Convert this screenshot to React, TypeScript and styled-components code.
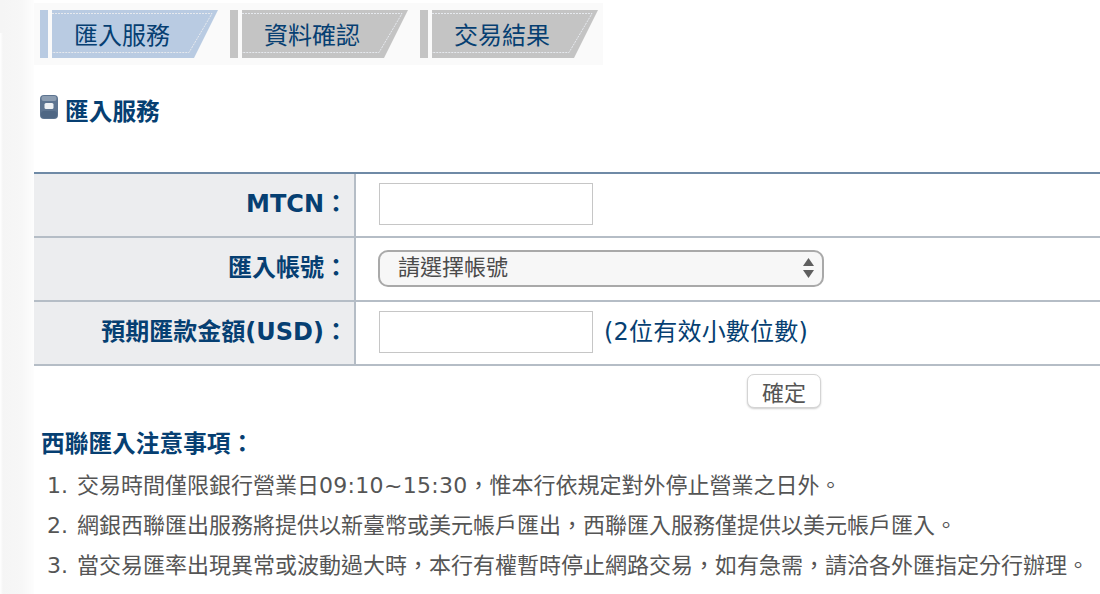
import styled, { createGlobalStyle } from 'styled-components';

const NAVY = '#063f72';
const FONT = `"DejaVu Sans", "Noto Sans CJK TC", sans-serif`;
const COLON = '\uFF1A';
const COMMA = '\uFF0C';

const steps = ['匯入服務', '資料確認', '交易結果'];

function App() {
  return (
    <Page>
      <GlobalStyle />
      <Sidebar />
      <Main>
        <StepBand>
          {steps.map((step, index) => (
            <Step key={step}>
              <StepBar $active={index === 0} />
              <StepLabel $active={index === 0}>
                <StepEdge viewBox="0 0 166 48">
                  <polyline points="0,3.5 160,3.5 137,42.5 0,42.5" />
                </StepEdge>
                <StepText>{step}</StepText>
              </StepLabel>
            </Step>
          ))}
        </StepBand>

        <Heading>
          <HeadingIcon viewBox="0 0 18 24">
            <rect x="0" y="0" width="18" height="24" rx="4" fill="#5d7490" />
            <rect x="1.5" y="1" width="15" height="5" rx="2" fill="#8c9db1" />
            <rect x="4.5" y="8" width="9" height="6" rx="1.5" fill="#eef1f4" />
            <rect x="1" y="16" width="16" height="7" rx="3" fill="#4f6784" />
          </HeadingIcon>
          匯入服務
        </Heading>

        <FormTable>
          <Row>
            <LabelCell>MTCN{COLON}</LabelCell>
            <ValueCell>
              <TextInput type="text" />
            </ValueCell>
          </Row>
          <Row>
            <LabelCell>匯入帳號{COLON}</LabelCell>
            <ValueCell>
              <SelectBox>
                <span>請選擇帳號</span>
                <SelectArrows viewBox="0 0 11 20">
                  <path d="M5.5 0 L11 8 L0 8 Z" fill="#5f5f5f" />
                  <path d="M5.5 20 L11 12 L0 12 Z" fill="#5f5f5f" />
                </SelectArrows>
              </SelectBox>
            </ValueCell>
          </Row>
          <Row>
            <LabelCell>預期匯款金額(USD){COLON}</LabelCell>
            <ValueCell>
              <TextInput type="text" />
              <Hint>(2位有效小數位數)</Hint>
            </ValueCell>
          </Row>
        </FormTable>

        <Actions>
          <ConfirmButton type="button">確定</ConfirmButton>
        </Actions>

        <NotesTitle>西聯匯入注意事項{COLON}</NotesTitle>
        <NotesList>
          <li>
            交易時間僅限銀行營業日<TimeRange>09:10~15:30</TimeRange>
            {COMMA}惟本行依規定對外停止營業之日外。
          </li>
          <li>網銀西聯匯出服務將提供以新臺幣或美元帳戶匯出{COMMA}西聯匯入服務僅提供以美元帳戶匯入。</li>
          <li>
            當交易匯率出現異常或波動過大時{COMMA}本行有權暫時停止網路交易{COMMA}如有急需{COMMA}
            請洽各外匯指定分行辦理。
          </li>
        </NotesList>
      </Main>
    </Page>
  );
}

export default App;

const GlobalStyle = createGlobalStyle`
  html, body {
    margin: 0;
    padding: 0;
    background: #fff;
  }
`;

const Page = styled.div`
  width: 1100px;
  height: 594px;
  overflow: hidden;
  display: flex;
  font-family: ${FONT};
`;

const Sidebar = styled.div`
  width: 34px;
  flex-shrink: 0;
  background:
    linear-gradient(#f5f5f5, #f5f5f5) 0 0 / 3px 33px no-repeat,
    linear-gradient(to right, #fff 0, #f5f5f5 3px, #f7f7f7 22px, #fdfdfd 34px);
`;

const Main = styled.div`
  flex: 1;
  min-width: 0;
`;

const StepBand = styled.div`
  width: 569px;
  height: 62px;
  margin-top: 3px;
  padding: 7px 0 0 6px;
  box-sizing: border-box;
  display: flex;
  gap: 12px;
  background: #fafafa;
`;

const Step = styled.div`
  display: flex;
  gap: 4px;
  height: 48px;
`;

const StepBar = styled.div<{ $active: boolean }>`
  width: 8px;
  background: ${({ $active }) => ($active ? '#b9cbe2' : '#c4c4c4')};
`;

const StepLabel = styled.div<{ $active: boolean }>`
  position: relative;
  width: 166px;
  padding: 4px 0 0 22px;
  box-sizing: border-box;
  display: flex;
  align-items: center;
  background: ${({ $active }) => ($active ? '#b9cbe2' : '#c4c4c4')};
  clip-path: polygon(0 0, 100% 0, 142px 100%, 0 100%);
`;

const StepEdge = styled.svg`
  position: absolute;
  inset: 0;
  width: 166px;
  height: 48px;

  polyline {
    fill: none;
    stroke: #e6e9ee;
    stroke-width: 1;
    stroke-dasharray: 2 1;
  }
`;

const StepText = styled.span`
  position: relative;
  font-size: 24px;
  line-height: 28px;
  color: ${NAVY};
`;

const Heading = styled.h2`
  margin: 29px 0 0 6px;
  height: 32px;
  display: flex;
  align-items: center;
  gap: 7px;
  font-size: 23.7px;
  font-weight: 700;
  color: ${NAVY};
`;

const HeadingIcon = styled.svg`
  width: 18px;
  height: 24px;
  margin-bottom: 6px;
`;

const FormTable = styled.div`
  margin-top: 46px;
  border-top: 2px solid #6f8aa6;
`;

const Row = styled.div`
  display: flex;
  height: 62px;
  border-bottom: 2px solid #b5bdc6;
`;

const LabelCell = styled.div`
  width: 320px;
  flex-shrink: 0;
  padding: 0 6px 2px 0;
  box-sizing: border-box;
  display: flex;
  align-items: center;
  justify-content: flex-end;
  background: #ecedef;
  font-size: 24px;
  line-height: 28px;
  font-weight: 700;
  color: ${NAVY};
`;

const ValueCell = styled.div`
  flex: 1;
  display: flex;
  align-items: center;
  padding-left: 23px;
  border-left: 2px solid #b5bdc6;
`;

const TextInput = styled.input`
  width: 214px;
  height: 42px;
  margin-bottom: 2px;
  padding: 0;
  box-sizing: border-box;
  border: 1px solid #c6c6c6;
  background: #fff;
  outline: none;
`;

const SelectBox = styled.div`
  width: 446px;
  height: 37px;
  margin: 0 0 2px -1px;
  padding: 0 8px 0 18px;
  box-sizing: border-box;
  display: flex;
  align-items: center;
  justify-content: space-between;
  border: 2px solid #a9a9a9;
  border-radius: 10px;
  background: #f7f7f7;
  font-size: 22px;
  line-height: 28px;
  color: #4b4b4b;
`;

const SelectArrows = styled.svg`
  width: 11px;
  height: 20px;
`;

const Hint = styled.span`
  margin: 0 0 3px 11px;
  font-size: 24px;
  line-height: 28px;
  letter-spacing: 0.2px;
  color: ${NAVY};
`;

const Actions = styled.div`
  margin-top: 8px;
  padding-left: 713px;
`;

const ConfirmButton = styled.button`
  width: 74px;
  height: 34px;
  padding: 0 0 2px;
  display: block;
  border: 1px solid #d4d4d4;
  border-radius: 7px;
  background: #fff;
  box-shadow: 0 1px 2px rgba(0, 0, 0, 0.2);
  font-family: ${FONT};
  font-size: 22px;
  color: #555;
`;

const NotesTitle = styled.div`
  margin: 19px 0 0 7px;
  font-size: 23.7px;
  line-height: 34px;
  font-weight: 700;
  color: ${NAVY};
`;

const NotesList = styled.ol`
  margin: 5px 0 0 13px;
  padding: 0;
  list-style: none;
  counter-reset: note;
  font-size: 22px;
  line-height: 40px;
  color: #555;

  li {
    white-space: nowrap;
    counter-increment: note;
  }

  li::before {
    content: counter(note) '.';
    display: inline-block;
    width: 30px;
  }
`;

const TimeRange = styled.span`
  letter-spacing: 0.3px;
`;
